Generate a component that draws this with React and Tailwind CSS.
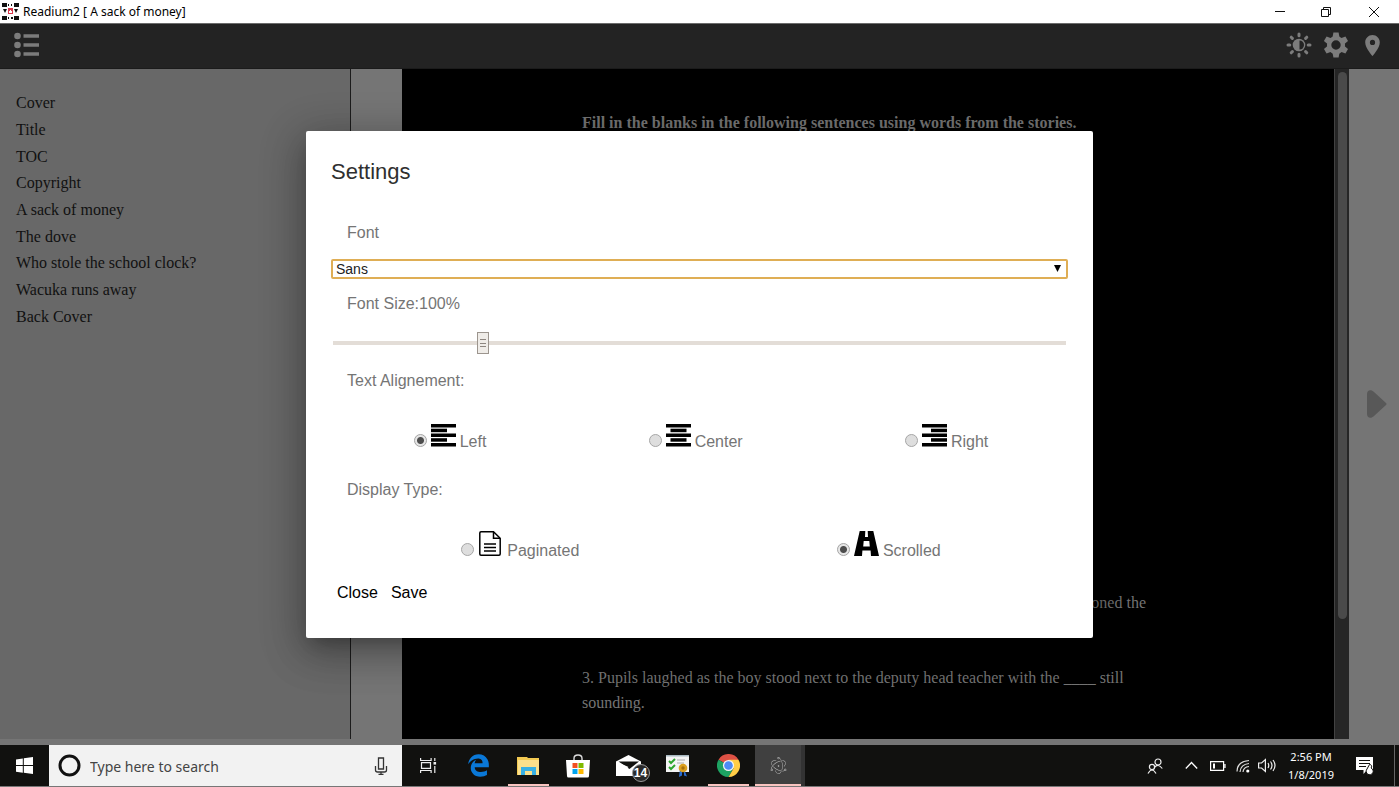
import React, { useState } from 'react';
import { MdLocationOn } from 'react-icons/md';
import { FaEdgeLegacy } from 'react-icons/fa';
import { SiElectron } from 'react-icons/si';

const chapters = [
  'Cover',
  'Title',
  'TOC',
  'Copyright',
  'A sack of money',
  'The dove',
  'Who stole the school clock?',
  'Wacuka runs away',
  'Back Cover',
];

function TitleBar() {
  return (
    <header className="flex h-6 shrink-0 items-center justify-between border-b border-[#6b6b6b] bg-white pl-[2px] font-['Noto_Sans',sans-serif] text-xs text-black">
      <div className="flex items-center gap-1">
        <svg className="h-[17px] w-[17px]" viewBox="0 0 17 17">
          <path d="M0 0h5v4H0zM12 0h5v4h-5zM0 13h5v4H0zM12 13h5v4h-5zM6 1h1v2H6zM9 1h1v2H9zM6 14h1v2H6zM9 14h2v2H9zM1 6h4L3 10zM12 6h4l-2 4z" fill="#111" />
          <path d="M6 5h5v6H6z" fill="#d8374a" />
          <path d="M8 7h1v1h1v2H7V8h1z" fill="#fff" />
        </svg>
        <h1>Readium2 [ A sack of money]</h1>
      </div>
      <div className="flex pr-px">
        <button aria-label="Minimize" className="flex h-5 w-[46px] items-center justify-center">
          <svg className="h-3 w-3" viewBox="0 0 12 12" stroke="#111" fill="none">
            <path d="M1 5.500h10" />
          </svg>
        </button>
        <button aria-label="Restore" className="flex h-5 w-[46px] items-center justify-center">
          <svg className="h-3 w-3" viewBox="0 0 12 12" stroke="#111" fill="none">
            <path d="M1.500 3.500h7v7h-7zM3.500 3.500v-2h7v7h-2" />
          </svg>
        </button>
        <button aria-label="Close window" className="flex h-5 w-[49px] items-center justify-center">
          <svg className="h-3 w-3" viewBox="0 0 12 12" stroke="#111" fill="none">
            <path d="M1 1l10 10M11 1L1 11" />
          </svg>
        </button>
      </div>
    </header>
  );
}

function Toolbar() {
  return (
    <div className="flex h-[45px] shrink-0 items-center justify-between border-b border-[#1b1b1b] bg-[#232323] pl-[14px] pr-[14px] pb-[2px] text-[#7c7c7c]">
      <button aria-label="Table of contents">
        <svg className="h-[26px] w-[26px]" viewBox="0 0 26 26" fill="currentColor">
          <circle cx="3.500" cy="4" r="3.300" />
          <circle cx="3.500" cy="13" r="3.300" />
          <circle cx="3.500" cy="22" r="3.300" />
          <path d="M9.500 2.300h15.500v3.400H9.500zM9.500 11.300h15.500v3.400H9.500zM9.500 20.300h15.500v3.400H9.500z" />
        </svg>
      </button>
      <div className="flex items-center gap-[11px]">
        <button aria-label="Night mode">
          <svg className="h-[26px] w-[26px]" viewBox="0 0 26 26">
            <g stroke="currentColor" strokeWidth="3" strokeLinecap="round">
              <path d="M13 2v1.800M13 22.200V24M2 13h1.800M22.200 13H24M5.200 5.200l1.200 1.200M19.600 19.600l1.200 1.200M5.200 20.800l1.200-1.200M19.600 6.400l1.200-1.200" />
            </g>
            <circle cx="13" cy="13" r="6.300" fill="currentColor" />
            <path d="M13.500 8.500a4.500 4.500 0 0 1 0 9z" fill="#232323" />
          </svg>
        </button>
        <button aria-label="Settings">
          <svg className="h-[26px] w-[26px]" viewBox="0 0 26 26">
            <circle cx="13" cy="13" r="6.900" fill="none" stroke="currentColor" strokeWidth="4.400" />
            <g fill="currentColor">
              <path id="tooth" d="M10.400.600h5.200l1 5.400H9.400z" />
              <use href="#tooth" transform="rotate(60 13 13)" />
              <use href="#tooth" transform="rotate(120 13 13)" />
              <use href="#tooth" transform="rotate(180 13 13)" />
              <use href="#tooth" transform="rotate(240 13 13)" />
              <use href="#tooth" transform="rotate(300 13 13)" />
            </g>
          </svg>
        </button>
        <button aria-label="Bookmarks">
          <MdLocationOn className="h-[25px] w-[25px]" />
        </button>
      </div>
    </div>
  );
}

function Sidebar() {
  return (
    <nav className="w-[351px] shrink-0 border-r border-[#1c1c1c] bg-[#686868] pl-4 pt-[21px] font-['Liberation_Serif',serif] text-base text-[#111]">
      <ul className="grid h-60 auto-rows-fr">
        {chapters.map((title) => (
          <li key={title} className="flex items-center">
            <a href="#chapter">{title}</a>
          </li>
        ))}
      </ul>
    </nav>
  );
}

function Reader() {
  return (
    <main className="flex min-w-0 flex-1">
      <article className="ml-[51px] flex min-w-0 flex-1 flex-col justify-between bg-black pb-6 pl-[180px] pr-[180px] pt-[41px] font-['Liberation_Serif',serif] text-base leading-[25px] text-[#757575]">
        <h2 className="whitespace-nowrap font-bold">
          Fill in the blanks in the following sentences using words from the stories.
        </h2>
        <div>
          <p className="mb-[50px] pr-2 text-right">oned the</p>
          <p>
            3. Pupils laughed as the boy stood next to the deputy head teacher with the ____ still sounding.
          </p>
        </div>
      </article>
      <div className="flex w-[15px] justify-center border-l border-[#424242] bg-[#262626] pt-[3px]">
        <div className="h-[547px] w-[9px] rounded-full bg-[#4a4a4a]" />
      </div>
      <div className="flex w-[50px] items-center justify-end pr-3">
        <button aria-label="Next page">
          <svg className="h-7 w-5" viewBox="0 0 20 28">
            <path d="M0 4C0 0 4-1 7 2l12 11q1 1 0 2L7 26c-3 3-7 2-7-2z" fill="#585858" />
          </svg>
        </button>
      </div>
    </main>
  );
}

function AlignIcon({ offset }) {
  return (
    <svg className="h-[23px] w-[25px]" viewBox="0 0 25 23">
      <path d="M0 0h25v3.500H0zM0 9.500h25V13H0zM0 19h25v3.500H0z" />
      <rect x={offset} y="4.700" width="16" height="3.500" />
      <rect x={offset} y="14.200" width="16" height="3.500" />
    </svg>
  );
}

function PageIcon() {
  return (
    <svg className="h-[25px] w-[25px]" viewBox="0 0 25 25" fill="none" stroke="#000">
      <path d="M3 .800h12.500l6.700 6.400V23q0 1.200-1.200 1.200H3Q1.800 24.200 1.800 23V2Q1.800.800 3 .800z" strokeWidth="1.500" />
      <path d="M15.500 1v6.300H22" strokeWidth="1.500" />
      <path d="M6 13h12M6 16.500h12M6 20h12" strokeWidth="1.400" />
    </svg>
  );
}

function RoadIcon() {
  return (
    <svg className="h-[25px] w-[25px]" viewBox="0 0 25 25">
      <path d="M5.700 0h5.600L11 6h3l-.300-6h5.600L25 25h-8l-.400-5.500H8.400L8 25H0zM9.700 10l-.500 5.500h6.600l-.500-5.500z" fillRule="evenodd" />
    </svg>
  );
}

function RadioOption({ name, value, selected, onChange, icon, label }) {
  return (
    <label className="flex items-end">
      <input
        type="radio"
        name={name}
        value={value}
        checked={selected === value}
        onChange={() => onChange(value)}
        className="mb-[5px] ml-[3px] mr-1 h-[13px] w-[13px] appearance-none rounded-full border border-[#a6a6a6] bg-[#dedede] checked:bg-[radial-gradient(circle,#4d4d4d_0_3px,#e6e6e6_4px)]"
      />
      <span className="mb-[5px] mr-1">{icon}</span>
      <span className="leading-5">{label}</span>
    </label>
  );
}

function SettingsDialog() {
  const [font, setFont] = useState('Sans');
  const [fontSize, setFontSize] = useState(100);
  const [align, setAlign] = useState('left');
  const [display, setDisplay] = useState('scrolled');

  return (
    <div className="absolute inset-0 flex items-center justify-center">
      <form
        role="dialog"
        aria-labelledby="settings-title"
        onSubmit={(e) => e.preventDefault()}
        className="w-[787px] max-w-full rounded-xs bg-white px-[25px] pb-[35px] pt-[25px] font-['Liberation_Sans',sans-serif] text-base leading-5 text-[#757575] shadow-[0_11px_15px_-7px_rgba(0,0,0,0.2),0_9px_46px_8px_rgba(0,0,0,0.12),0_12px_38px_3px_rgba(0,0,0,0.25)]"
      >
        <h2 id="settings-title" className="text-[22px] leading-8 text-[#2f2f2f]">Settings</h2>

        <label htmlFor="font" className="mt-[35px] block pl-4">Font</label>
        <div className="relative mt-4">
          <select
            id="font"
            value={font}
            onChange={(e) => setFont(e.target.value)}
            className="block h-5 w-full appearance-none rounded-xs border-2 border-[#dfae55] bg-white pl-[3px] text-sm leading-4 text-[#222] outline-none"
          >
            <option>Sans</option>
            <option>Serif</option>
          </select>
          <svg className="pointer-events-none absolute right-[7px] top-[6px] h-[7px] w-[7px]" viewBox="0 0 7 7">
            <path d="M0 0h7L3.500 7z" />
          </svg>
        </div>

        <label htmlFor="font-size" className="mt-[15px] block pl-4">Font Size:{fontSize}%</label>
        <div className="mt-[18px] px-[2px]">
          <input
            id="font-size"
            type="range"
            min="75"
            max="200"
            value={fontSize}
            onChange={(e) => setFontSize(Number(e.target.value))}
            className="block h-[21px] w-full appearance-none bg-transparent [&::-webkit-slider-runnable-track]:h-1 [&::-webkit-slider-runnable-track]:bg-[#e3ddd7] [&::-webkit-slider-thumb]:-mt-[9px] [&::-webkit-slider-thumb]:h-[22px] [&::-webkit-slider-thumb]:w-3 [&::-webkit-slider-thumb]:appearance-none [&::-webkit-slider-thumb]:border [&::-webkit-slider-thumb]:border-[#9c958e] [&::-webkit-slider-thumb]:[background:linear-gradient(#8d8680,#8d8680)_center_6px/6px_1px_no-repeat,linear-gradient(#8d8680,#8d8680)_center_10px/6px_1px_no-repeat,linear-gradient(#8d8680,#8d8680)_center_13px/6px_1px_no-repeat,#efece8]"
          />
        </div>

        <fieldset>
          <legend className="pl-4 pt-[18px]">Text Alignement:</legend>
          <div className="mt-[33px] flex justify-around">
            <RadioOption name="align" value="left" selected={align} onChange={setAlign} icon={<AlignIcon offset="0" />} label="Left" />
            <RadioOption name="align" value="center" selected={align} onChange={setAlign} icon={<AlignIcon offset="4.5" />} label="Center" />
            <RadioOption name="align" value="right" selected={align} onChange={setAlign} icon={<AlignIcon offset="9" />} label="Right" />
          </div>
        </fieldset>

        <fieldset>
          <legend className="pl-4 pt-7">Display Type:</legend>
          <div className="mt-[31px] flex justify-around">
            <RadioOption name="display" value="paginated" selected={display} onChange={setDisplay} icon={<PageIcon />} label="Paginated" />
            <RadioOption name="display" value="scrolled" selected={display} onChange={setDisplay} icon={<RoadIcon />} label="Scrolled" />
          </div>
        </fieldset>

        <div className="mt-[22px] flex gap-[13px] pl-[6px] text-black">
          <button type="button">Close</button>
          <button type="submit">Save</button>
        </div>
      </form>
    </div>
  );
}

function TaskButton({ label, running, active, children }) {
  return (
    <button
      aria-label={label}
      className={`flex h-full w-[50px] items-center justify-center ${active ? 'ml-[2px] border-r-4 border-r-[#333] bg-[#404040]' : ''}`}
    >
      <span
        className={`flex h-full items-center justify-center border-b-2 pt-[2px] ${active ? 'w-full' : 'w-[41px]'} ${running ? 'border-[#f9c4c0]' : 'border-transparent'}`}
      >
        {children}
      </span>
    </button>
  );
}

function Taskbar() {
  return (
    <footer className="flex h-[42px] shrink-0 items-stretch border-b border-[#777] bg-[#11110f] font-['Noto_Sans',sans-serif] text-white">
      <button aria-label="Start" className="flex w-[49px] items-center justify-center">
        <svg className="h-[17px] w-[17px]" viewBox="0 0 17 17" fill="#fff">
          <path d="M0 2.400L6.800 1.400V8H0zM7.800 1.300L17 0v8H7.800zM0 9h6.800v6.700L0 14.700zM7.800 9H17v8l-9.200-1.300z" />
        </svg>
      </button>
      <div className="flex w-[353px] items-center bg-[#f2f2f2] pl-[9px] pr-[14px]">
        <svg className="h-[23px] w-[23px] shrink-0" viewBox="0 0 23 23">
          <circle cx="11.500" cy="11.500" r="9.500" fill="none" stroke="#111" strokeWidth="3" />
        </svg>
        <input
          aria-label="Search"
          placeholder="Type here to search"
          className="ml-[9px] min-w-0 flex-1 bg-transparent pt-[2px] text-sm outline-none placeholder:text-[#444]"
        />
        <svg className="h-[18px] w-[14px]" viewBox="0 0 14 18" fill="none" stroke="#333" strokeWidth="1.300">
          <path d="M4.500 1h5v11h-5zM1.500 9v4q0 2 2 2h7q2 0 2-2V9M7 15v2.500M4.500 17.300h5" />
        </svg>
      </div>

      <div className="flex flex-1 pl-px">
        <TaskButton label="Task view">
          <svg className="h-[17px] w-[17px]" viewBox="0 0 17 17" fill="none" stroke="#eee" strokeWidth="1.200">
            <path d="M.6 1v2.500h10.500V1M.600 16v-2.500h10.500V16M1.500 5.700h9v5.600h-9zM14.800 1v3M14.800 9v7" />
            <path d="M13.500 5h2.600v2.600h-2.600z" fill="#eee" stroke="none" />
          </svg>
        </TaskButton>
        <TaskButton label="Edge">
          <FaEdgeLegacy className="h-[23px] w-[23px] text-[#0a78d7]" />
        </TaskButton>
        <TaskButton label="File Explorer" running>
          <svg className="h-5 w-[23px]" viewBox="0 0 23 20">
            <path d="M0 1h10l1 1h11v17H0z" fill="#f3ca52" />
            <path d="M1 4h21v15H1z" fill="#fbe08c" />
            <path d="M4 11h15v8h-4v-4H8v4H4z" fill="#38b0e4" />
          </svg>
        </TaskButton>
        <TaskButton label="Store">
          <svg className="h-6 w-6" viewBox="0 0 24 24">
            <path d="M8 8V4.500Q8 1 12 1t4 3.500V8" fill="none" stroke="#ddd" strokeWidth="1.400" />
            <path d="M0 6h24l-1 16q0 1.500-1.500 1.500h-19Q1 23.500 1 22z" fill="#fff" />
            <path d="M6.500 9h5v5h-5z" fill="#f25022" />
            <path d="M12.500 9h5v5h-5z" fill="#7fba00" />
            <path d="M6.500 15h5v5h-5z" fill="#00a4ef" />
            <path d="M12.500 15h5v5h-5z" fill="#ffb900" />
          </svg>
        </TaskButton>
        <TaskButton label="Mail">
          <span className="relative flex">
            <svg className="h-[21px] w-[25px]" viewBox="0 0 25 21">
              <path d="M0 6.500L12.500 0 25 6.500V21H0z" fill="#fff" />
              <path d="M2.500 6.500h20.500L13.500 14z" fill="#11110f" />
              <path d="M0 6.500l12.500 5.500L8 16z" fill="#fff" />
            </svg>
            <span className="absolute -bottom-[6px] -right-[9px] flex h-[18px] w-[18px] items-center justify-center rounded-full border border-[#999] bg-[#2a2a2a] font-['Liberation_Sans',sans-serif] text-xs font-bold">
              14
            </span>
          </span>
        </TaskButton>
        <TaskButton label="Certificates">
          <svg className="h-[23px] w-6" viewBox="0 0 24 23">
            <path d="M0 1h23v17H0z" fill="#f4f4f4" />
            <path d="M0 1h23v1.500H0z" fill="#a8b8c0" />
            <path d="M3 7l2 2 4-4M3 13l2 2 4-4" fill="none" stroke="#2da52d" strokeWidth="2" />
            <path d="M11 6h8M11 9h7" stroke="#aaa" />
            <path d="M14 15l-1 8 3-1.500V17zM18 15l3 7.500-3-1V17z" fill="#2a6cd0" />
            <circle cx="17" cy="14" r="4.300" fill="#dba020" />
            <circle cx="17" cy="14" r="1.700" fill="#a8700c" />
          </svg>
        </TaskButton>
        <TaskButton label="Chrome" running>
          <svg className="h-[23px] w-[23px]" viewBox="0 0 24 24">
            <path d="M12 12L1.600 6A12 12 0 0 1 22.400 6z" fill="#dd5144" />
            <path d="M12 12L1.600 6A12 12 0 0 0 12 24l5.200-9z" fill="#1da362" />
            <path d="M12 6h10.400A12 12 0 0 1 12 24l5.200-9z" fill="#ffcd46" />
            <circle cx="12" cy="12" r="5.800" fill="#f4f4f4" />
            <circle cx="12" cy="12" r="4.500" fill="#4c8bf5" />
          </svg>
        </TaskButton>
        <TaskButton label="Readium2" running active>
          <SiElectron className="h-[17px] w-[17px] text-[#c4c4c4]" />
        </TaskButton>
      </div>

      <div className="flex items-center">
        <button aria-label="People" className="mr-[22px]">
          <svg className="h-4 w-4" viewBox="0 0 16 16" fill="none" stroke="#eee" strokeWidth="1.200">
            <circle cx="11" cy="4" r="3" />
            <path d="M7.500 9.500Q11 5 15.300 10.500" />
            <circle cx="5" cy="9" r="2.600" />
            <path d="M1 15.500q4-7 8 0" />
          </svg>
        </button>
        <button aria-label="Show hidden icons" className="mr-3">
          <svg className="h-[13px] w-[13px]" viewBox="0 0 13 13" fill="none" stroke="#fff" strokeWidth="1.300">
            <path d="M.800 9.500l5.700-6 5.700 6" />
          </svg>
        </button>
        <svg className="mr-[10px] h-[10px] w-4" viewBox="0 0 16 10" fill="none" stroke="#fff" strokeWidth="1.200">
          <path d="M.600.600h13v8.800H.600zM15 3v4" />
          <path d="M3 2.500h2v5H3z" fill="#fff" stroke="none" />
        </svg>
        <svg className="mr-2 h-[14px] w-[14px]" viewBox="0 0 14 14" fill="none" stroke="#ddd" strokeWidth="1.200">
          <path d="M1 12.500Q1 2.500 13 1.500M4 13Q4.500 5.500 13 4.500M7 13q.500-5 6-5.500" />
          <circle cx="11.800" cy="12" r="1.600" fill="#fff" stroke="none" />
        </svg>
        <svg className="mr-3 h-[15px] w-[18px]" viewBox="0 0 18 15" fill="none" stroke="#eee" strokeWidth="1.200">
          <path d="M.600 5h3l3.800-3.500v12L3.600 10h-3zM10 5q1.500 2.500 0 5M12.500 3.500q3 4 0 8M15 2q4 5.500 0 11" />
        </svg>
        <time className="text-center text-[11px] leading-[18px]">
          2:56 PM
          <br />
          1/8/2019
        </time>
        <button aria-label="Notifications" className="ml-[22px] mr-5">
          <svg className="h-[18px] w-[18px]" viewBox="0 0 18 18">
            <path d="M0 0h17v13h-6l-3.500 4v-4H0z" fill="#fff" />
            <path d="M3 3.500h11M3 6.500h11M3 9.500h7" stroke="#11110f" strokeWidth="1.200" />
            <path d="M13.500 7.500a2 2 0 0 1 1.500 3.500 3.500 3.500 0 1 1-4 1z" fill="#fff" stroke="#11110f" />
          </svg>
        </button>
        <div className="h-full w-[5px] border-l border-[#666]" />
      </div>
    </footer>
  );
}

export default function App() {
  return (
    <div className="flex h-screen flex-col overflow-hidden">
      <TitleBar />
      <div className="relative flex min-h-0 flex-1 flex-col bg-[#757575] pb-[6px]">
        <Toolbar />
        <div className="flex min-h-0 flex-1">
          <Sidebar />
          <Reader />
        </div>
        <SettingsDialog />
      </div>
      <Taskbar />
    </div>
  );
}
